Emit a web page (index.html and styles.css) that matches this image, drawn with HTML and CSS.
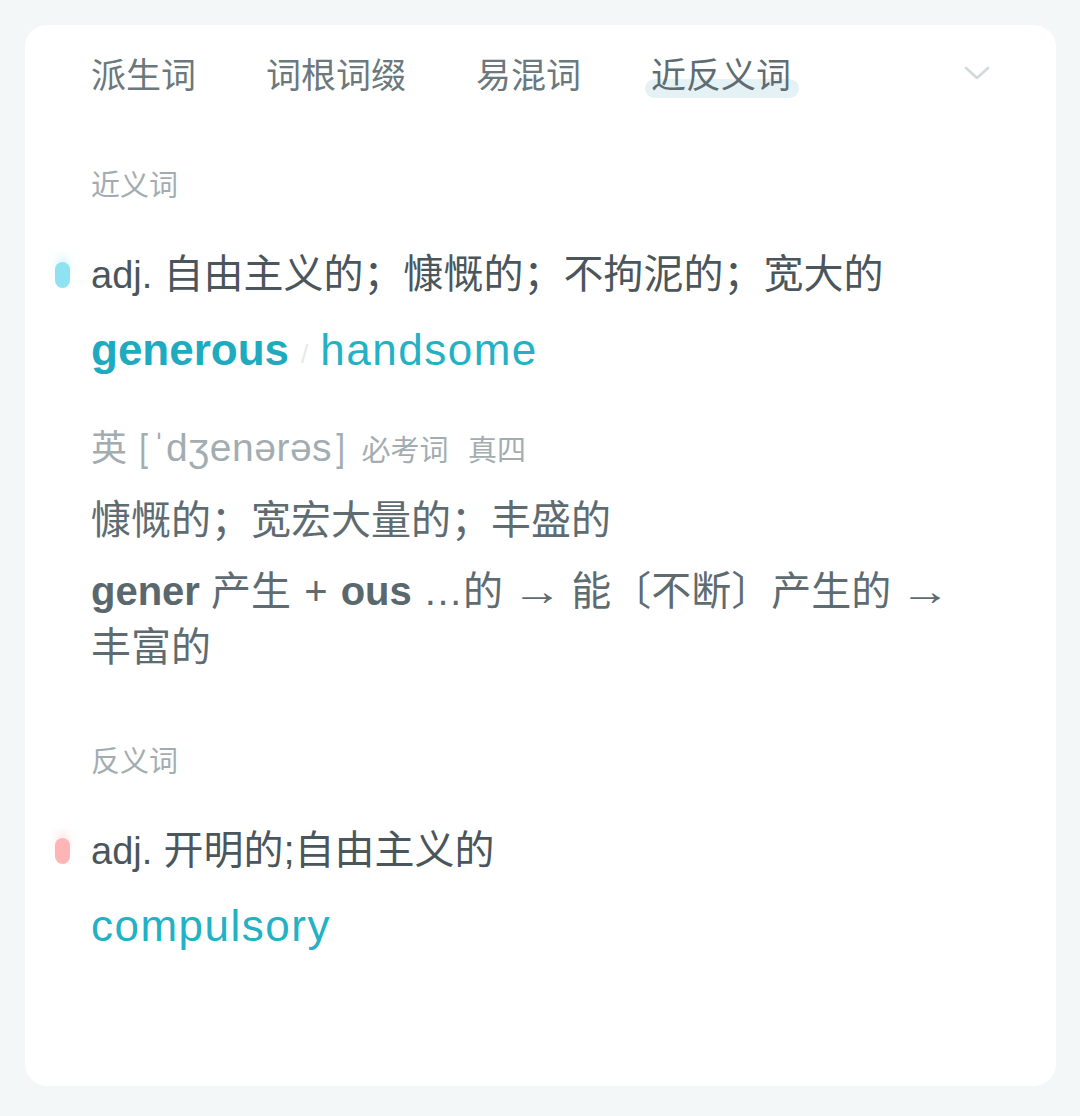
FILE: index.html
```html
<!DOCTYPE html>
<html lang="zh-CN">
<head>
    <meta charset="UTF-8">
    <meta name="viewport" content="width=device-width, initial-scale=1.0">
    <title>近反义词</title>
    <link rel="stylesheet" href="styles.css">
</head>
<body>
    <div class="card">
        <div class="tabs">
            <span class="tab">派生词</span>
            <span class="tab">词根词缀</span>
            <span class="tab">易混词</span>
            <span class="tab active">近反义词</span>
            <svg class="chevron" width="26" height="14" viewBox="0 0 26 14">
                <path d="M2 2 L13 12 L24 2" fill="none" stroke="#d2d9db" stroke-width="2.6" stroke-linecap="round" stroke-linejoin="round"/>
            </svg>
        </div>

        <div class="label label-syn">近义词</div>
        <div class="entry entry-syn">
            <span class="dot dot-blue"></span>
            <span class="pos">adj.</span> 自由主义的；慷慨的；不拘泥的；宽大的
        </div>
        <div class="words">
            <span class="word strong">generous</span><span class="sep">/</span><span class="word">handsome</span>
        </div>

        <div class="phonetic">
            英 <span class="ipa"><span class="br">[</span>ˈdʒenərəs<span class="br">]</span></span> <span class="tags">必考词&nbsp;&nbsp;&nbsp;真四</span>
        </div>
        <div class="meaning">慷慨的；宽宏大量的；丰盛的</div>
        <div class="root">
            <b>gener</b> 产生 <span class="sym">+</span> <b>ous</b> …的 <span class="sym arrow">→</span> 能〔不断〕产生的 <span class="sym arrow">→</span> 丰富的
        </div>

        <div class="label label-ant">反义词</div>
        <div class="entry entry-ant">
            <span class="dot dot-red"></span>
            <span class="pos">adj.</span> 开明的;自由主义的
        </div>
        <div class="words">
            <span class="word">compulsory</span>
        </div>
    </div>
</body>
</html>
```

FILE: styles.css
```css
body {
    margin: 0;
    padding: 25px 24px 30px 25px;
    background-color: #f3f7f8;
    font-family: "Liberation Sans", "Noto Sans CJK SC", sans-serif;
    color: #4a565c;
}

.card {
    background: #fff;
    border-radius: 22px;
    height: 1061px;
    box-sizing: border-box;
    padding: 18px 60px 0 66px;
}

.tabs {
    display: flex;
    align-items: center;
    gap: 70px;
    height: 60px;
}

.tab {
    position: relative;
    z-index: 0;
    font-size: 35px;
    line-height: 60px;
    color: #6b787d;
    font-family: "Noto Sans CJK SC", sans-serif;
}

.tab.active {
    color: #5f6d72;
}

.tab.active::before {
    content: "";
    position: absolute;
    left: -6px;
    right: -8px;
    top: 36px;
    height: 19px;
    border-radius: 10px;
    background: #e4f2f6;
    z-index: -1;
}

.chevron {
    margin-left: auto;
    margin-right: 6px;
}

.label {
    font-size: 29px;
    line-height: 40px;
    color: #a3adb1;
    font-family: "Noto Sans CJK SC", sans-serif;
}

.label-syn { margin-top: 60px; }
.label-ant { margin-top: 64px; }

.entry {
    position: relative;
    font-size: 40px;
    line-height: 50px;
    color: #4a565c;
}

.entry-syn { margin-top: 46px; }
.entry-ant { margin-top: 46px; }

.pos {
    font-size: 38px;
}

.dot {
    position: absolute;
    left: -36px;
    top: 13px;
    width: 15px;
    height: 26px;
    border-radius: 8px;
}

.dot-blue {
    background: #8fe2f2;
    box-shadow: 0 -8px 8px -2px rgba(143, 226, 242, 0.35);
}

.dot-red {
    background: #ffb5b5;
    box-shadow: 0 -8px 8px -2px rgba(255, 181, 181, 0.35);
}

.words {
    margin-top: 22px;
    font-size: 44px;
    line-height: 56px;
    color: #22b1c5;
}

.word {
    letter-spacing: 1.5px;
}

.word.strong {
    font-weight: bold;
    letter-spacing: 0;
    color: #1eaabf;
}

.sep {
    display: inline-block;
    margin: 0 12px 0 12px;
    font-size: 26px;
    color: #e6eaeb;
    vertical-align: 2px;
}

.phonetic {
    margin-top: 38px;
    font-size: 36px;
    line-height: 50px;
    color: #a3adb1;
    font-family: "Noto Sans CJK SC", sans-serif;
}

.ipa {
    font-family: "Liberation Sans", sans-serif;
    font-size: 39px;
    letter-spacing: 0.5px;
}

.ipa .br {
    display: inline-block;
    font-weight: 300;
    transform: scaleX(0.8);
    margin: 0 3px;
}

.tags {
    margin-left: 4px;
    font-size: 29px;
}

.meaning {
    margin-top: 19px;
    font-size: 40px;
    line-height: 56px;
    color: #5e6c72;
}

.root {
    margin-top: 15px;
    max-width: 880px;
    font-size: 40px;
    line-height: 56px;
    color: #5e6c72;
}

.root b {
    font-weight: 600;
    color: #5a686e;
}

.root .sym {
    display: inline-block;
    font-size: 40px;
    margin: 0 2px;
}

.root .arrow {
    transform: scaleX(1.25);
    margin: 0 3px;
}
```
